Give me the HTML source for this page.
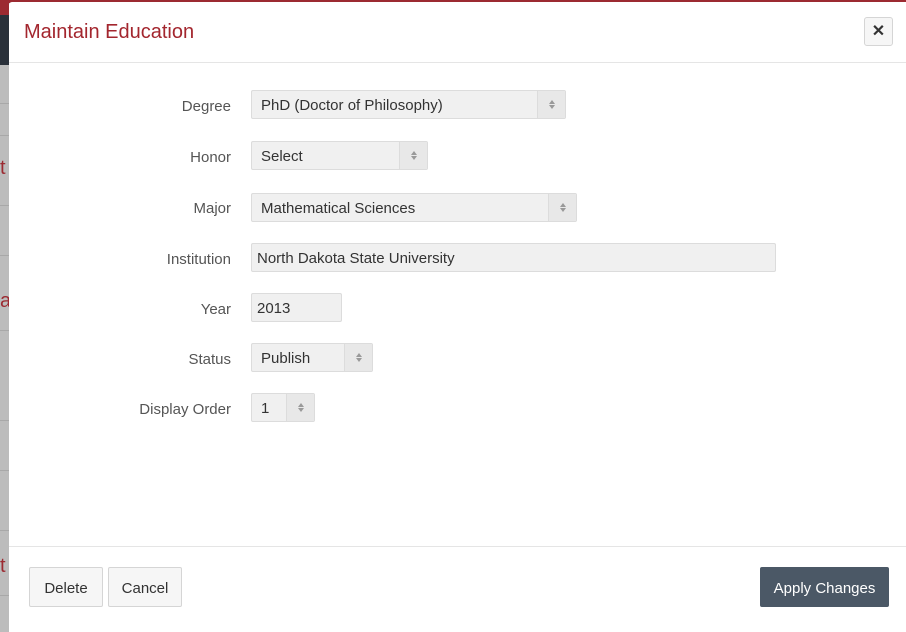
<!DOCTYPE html>
<html><head><style>
*{box-sizing:border-box;margin:0;padding:0}
body{width:906px;height:626px;overflow:hidden;background:#bcbcbc;font-family:"Liberation Sans",sans-serif;position:relative}
.bg{position:absolute;left:0;width:9px}
.modal{position:absolute;left:9px;top:2px;width:897px;height:630px;background:#fff;border-radius:3px 0 0 0}
.title{position:absolute;left:15px;top:19px;font-size:20px;color:#a3262e}
.close{position:absolute;left:855px;top:15px;width:29px;height:29px;border:1px solid #d5d5d5;border-radius:3px;background:#f6f6f6;text-align:center;line-height:27px;font-size:16px;color:#333;font-weight:bold}
.hr{position:absolute;left:0;width:897px;height:1px;background:#e5e5e5}
.lbl{position:absolute;right:675px;font-size:15px;color:#555;width:150px;text-align:right}
.f{position:absolute;left:242px;height:29px;background:#f0f0f0;border:1px solid #dcdcdc;border-radius:2px;font-size:15px;color:#333;line-height:30px;padding-left:9px}
.f.i{padding-left:5px}
.arr{position:absolute;right:0;top:0;width:28px;height:27px;border-left:1px solid #dcdcdc;background:#e8e8e8}
.arr:before{content:"";position:absolute;left:11px;top:9px;border:3px solid transparent;border-bottom:4px solid #999;border-top:0}
.arr:after{content:"";position:absolute;left:11px;top:14px;border:3px solid transparent;border-top:4px solid #999;border-bottom:0}
.btn{position:absolute;top:565px;height:40px;border:1px solid #d5d5d5;border-radius:2px;background:#f6f6f6;font-size:15px;color:#333;text-align:center;line-height:41px}
</style></head><body>
<div style="position:absolute;left:0;top:0;width:906px;height:3px;background:#9c2a31"></div>
<div class="bg" style="top:0;height:15px;background:#9c2a31"></div>
<div class="bg" style="top:15px;height:50px;background:#2a313a"></div>
<div class="bg" style="top:103px;height:1px;background:#a8a8a8"></div>
<div class="bg" style="top:135px;height:1px;background:#a8a8a8"></div>
<div class="bg" style="top:205px;height:1px;background:#a8a8a8"></div>
<div class="bg" style="top:255px;height:1px;background:#a8a8a8"></div>
<div class="bg" style="top:330px;height:1px;background:#a8a8a8"></div>
<div class="bg" style="top:420px;height:1px;background:#a8a8a8"></div>
<div class="bg" style="top:470px;height:1px;background:#a8a8a8"></div>
<div class="bg" style="top:530px;height:1px;background:#a8a8a8"></div>
<div class="bg" style="top:595px;height:1px;background:#a8a8a8"></div>
<div style="position:absolute;left:0;top:157px;color:#9c2a31;font-size:20px">t</div>
<div style="position:absolute;left:0;top:290px;color:#9c2a31;font-size:20px">a</div>
<div style="position:absolute;left:0;top:555px;color:#9c2a31;font-size:20px">t</div>
<div class="modal">
<div class="title">Maintain Education</div>
<div class="close">✕</div>
<div class="hr" style="top:60px"></div>
<div class="lbl" style="top:96px">Degree</div>
<div class="f" style="top:88px;width:315px">PhD (Doctor of Philosophy)<span class="arr"></span></div>
<div class="lbl" style="top:147px">Honor</div>
<div class="f" style="top:139px;width:177px">Select<span class="arr"></span></div>
<div class="lbl" style="top:198px">Major</div>
<div class="f" style="top:191px;width:326px">Mathematical Sciences<span class="arr"></span></div>
<div class="lbl" style="top:249px">Institution</div>
<div class="f i" style="top:241px;width:525px">North Dakota State University</div>
<div class="lbl" style="top:299px">Year</div>
<div class="f i" style="top:291px;width:91px">2013</div>
<div class="lbl" style="top:349px">Status</div>
<div class="f" style="top:341px;width:122px">Publish<span class="arr"></span></div>
<div class="lbl" style="top:399px">Display Order</div>
<div class="f" style="top:391px;width:64px">1<span class="arr"></span></div>
<div class="hr" style="top:544px"></div>
<div class="btn" style="left:20px;width:74px">Delete</div>
<div class="btn" style="left:99px;width:74px">Cancel</div>
<div class="btn" style="left:751px;width:129px;background:#4b5866;border-color:#4b5866;color:#fff">Apply Changes</div>
</div>
</body></html>
